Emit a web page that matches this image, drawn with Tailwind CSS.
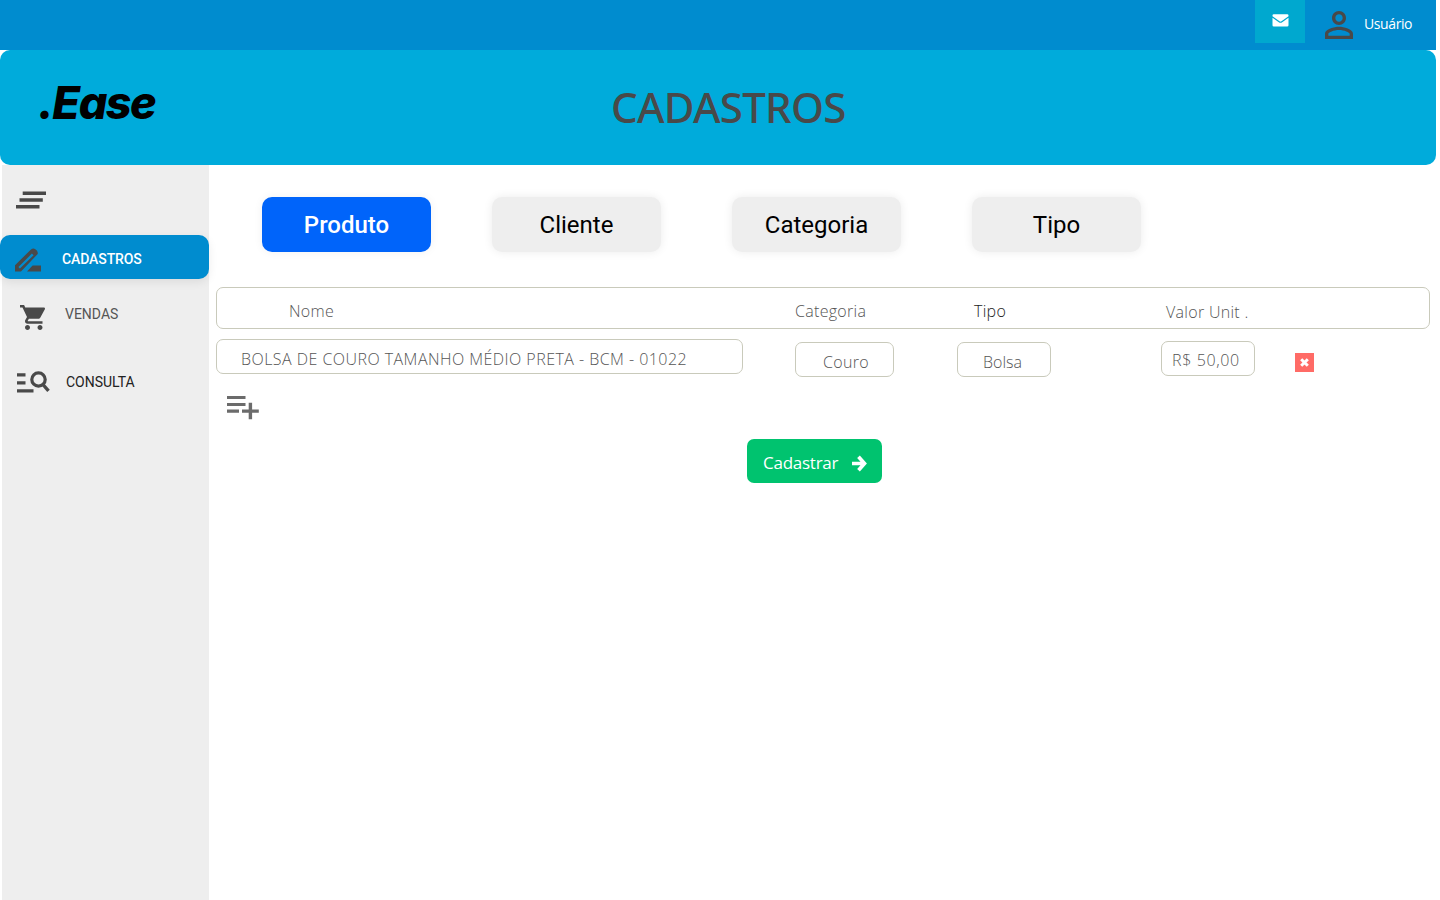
<!DOCTYPE html>
<html lang="pt-BR">
<head>
<meta charset="utf-8">
<title>.Ease - Cadastros</title>
<script src="https://cdn.jsdelivr.net/npm/@tailwindcss/browser@4"></script>
</head>
<body class="h-[900px] w-[1440px] overflow-hidden bg-white font-['Open_Sans','Noto_Sans',sans-serif]">
<div class="flex h-[900px] w-[1436px] flex-col">
  <header class="flex h-[50px] shrink-0 justify-end bg-[#008ccf]">
    <button class="flex h-[43px] w-[50px] items-start justify-center bg-[#00a8cf] pt-[14px]">
      <svg class="h-[13px] w-[17px]" viewBox="0 0 17 13"><path fill="#fff" d="M1.800.3h13.400q1.300 0 1.300 1.300v.7L9.500 7.300q-1 .7-2 0L.5 2.300v-.7Q.5.300 1.800.300zM.5 3.700l6.300 4.500q1.700 1.200 3.400 0l6.300-4.500v7.500q0 1.300-1.300 1.300H1.800Q.5 12.500.5 11.200z"/></svg>
    </button>
    <div class="flex w-[131px] pl-[20px]">
      <svg class="mt-[11px] h-[28px] w-[28px] shrink-0" viewBox="4 4 16 16"><path fill="#494949" d="M12 5.900c1.160 0 2.100.94 2.100 2.100s-.94 2.100-2.100 2.100S9.900 9.160 9.900 8s.94-2.100 2.100-2.100m0 9c2.970 0 6.100 1.460 6.100 2.100v1.100H5.900V17c0-.64 3.130-2.100 6.100-2.100M12 4C9.790 4 8 5.790 8 8s1.790 4 4 4 4-1.790 4-4-1.790-4-4-4zm0 9c-2.670 0-8 1.340-8 4v3h16v-3c0-2.660-5.330-4-8-4z"/></svg>
      <span class="ml-[11px] mt-[14px] text-[14px] leading-[20px] tracking-[-0.4px] text-white">Usuário</span>
    </div>
  </header>
  <div class="flex h-[115px] shrink-0 rounded-[10px] bg-[#00abdb]">
    <div class="w-[611px] shrink-0 pl-[38px] pt-[25px] font-['Inter'] text-[45px] font-extrabold italic leading-[55px] tracking-[-1.500px] text-black">.Ease</div>
    <h1 class="pt-[29px] font-['Noto_Sans'] text-[42px] font-medium leading-[56px] tracking-[-0.7px] text-[#494949]">CADASTROS</h1>
  </div>
  <div class="flex min-h-0 flex-1">
    <nav class="relative ml-[2px] w-[207px] shrink-0 bg-[#eee] font-['Roboto'] text-[14px]">
      <div class="h-[70px] pl-[14px] pt-[26px]">
        <svg class="h-[18px] w-[30px]" viewBox="0 0 30 18" fill="#494949"><path d="M6.700.6H30V4H6.700zM3.500 7.300h23.300v3.400H3.500zM0 14h23.500v3.400H0z"/></svg>
      </div>
      <a class="-ml-[2px] flex h-[44px] w-[209px] rounded-[10px] bg-[#008ccf] pl-[15px] shadow-[0_3px_10px_rgba(0,0,0,0.08)]">
        <svg class="mt-[13px] h-[24px] w-[27px]" viewBox="0 0 27 24" fill="#494949"><path fill-rule="evenodd" d="M0 17.200 15.700 1.700q2.200-1.800 4.300-.8 3.400 2 2.700 5.100L6 23.500H0zM3.400 18.900 4.900 20.400 18.600 7.200 16.900 5.600z"/><path d="M17.600 17.500H26v6H12z"/></svg>
        <span class="pl-[20px] pt-[14px] font-medium leading-[20px] tracking-[-0.1px] text-white">CADASTROS</span>
      </a>
      <a class="flex h-[66px] pl-[18px]">
        <svg class="mt-[26px] h-[25px] w-[25px]" viewBox="1 2 20 20" fill="#494949"><path d="M7 18c-1.100 0-1.990.9-1.990 2S5.900 22 7 22s2-.9 2-2-.9-2-2-2zM1 2v2h2l3.600 7.590-1.350 2.450C4.520 15.370 5.480 17 7 17h12v-2H7.420c-.14 0-.25-.11-.25-.25l.03-.12.9-1.630h7.450c.75 0 1.410-.41 1.750-1.030l3.580-6.490c.37-.66-.11-1.480-.87-1.480H5.210l-.94-2H1zm16 16c-1.100 0-1.990.9-1.990 2s.89 2 1.990 2 2-.9 2-2-.9-2-2-2z"/></svg>
        <span class="pl-[20px] pt-[25px] leading-[20px] text-[#555]">VENDAS</span>
      </a>
      <a class="flex h-[60px] pl-[15px]">
        <svg class="mt-[26px] h-[22px] w-[33px]" viewBox="0 0 33 22" fill="#494949"><path d="M0 2.200h8.500v3.300H0zM0 10.200h8.500v3.300H0zM0 18.200h16.500v3.300H0z"/><circle cx="21.500" cy="8.500" r="6.700" fill="none" stroke="#494949" stroke-width="3.200"/><path d="m25.500 13 6 6.800" stroke="#494949" stroke-width="3.400"/></svg>
        <span class="pl-[16px] pt-[27px] leading-[20px] text-[#222]">CONSULTA</span>
      </a>
    </nav>
    <main class="min-w-0 flex-1 pl-[7px] font-light text-[#555]">
      <div class="flex pl-[46px] pt-[32px] font-['Roboto'] text-[24px] font-normal text-black">
        <button class="h-[55px] w-[169px] rounded-[10px] bg-[#0064fa] font-medium text-white shadow-[0_0_10px_rgba(0,0,0,0.06)]">Produto</button>
        <button class="ml-[61px] h-[55px] w-[169px] rounded-[10px] bg-[#eee] shadow-[0_0_10px_rgba(0,0,0,0.08)]">Cliente</button>
        <button class="ml-[71px] h-[55px] w-[169px] rounded-[10px] bg-[#eee] shadow-[0_0_10px_rgba(0,0,0,0.08)]">Categoria</button>
        <button class="ml-[71px] h-[55px] w-[169px] rounded-[10px] bg-[#eee] shadow-[0_0_10px_rgba(0,0,0,0.08)]">Tipo</button>
      </div>
      <div class="mt-[35px] flex h-[42px] w-[1214px] rounded-[7px] border border-[#c9cabb] pl-[72px] pt-[12px] text-[16px] leading-[22px] tracking-[0.3px]">
        <span class="w-[506px]">Nome</span>
        <span class="w-[179px]">Categoria</span>
        <span class="w-[192px] text-[#222]">Tipo</span>
        <span class="pt-px">Valor Unit .</span>
      </div>
      <div class="flex items-start pt-[10px] text-[16px] leading-[22px]">
        <div class="h-[35px] w-[527px] rounded-[7px] border border-[#c9cabb] pl-[24px] pt-[8px] tracking-[0.46px]">BOLSA DE COURO TAMANHO MÉDIO PRETA - BCM - 01022</div>
        <div class="ml-[52px] mt-[3px] h-[35px] w-[99px] rounded-[7px] border border-[#c9cabb] pl-[27px] pt-[8px] tracking-[0.3px]">Couro</div>
        <div class="ml-[63px] mt-[3px] h-[35px] w-[94px] rounded-[7px] border border-[#c9cabb] pl-[25px] pt-[8px]">Bolsa</div>
        <div class="ml-[110px] mt-[2px] h-[35px] w-[94px] rounded-[7px] border border-[#c9cabb] pl-[10px] pt-[7px] tracking-[0.62px]">R$ 50,00</div>
        <button class="ml-[40px] mt-[14px] flex h-[19px] w-[19px] items-center justify-center bg-[#ff6b66]">
          <svg class="h-[9px] w-[9px]" viewBox="0 0 9 9"><path stroke="#fff" stroke-width="3" d="m1.200 1.200 6.600 6.600m0-6.600L1.200 7.800"/></svg>
        </button>
      </div>
      <svg class="ml-[11px] mt-[18px] h-[25px] w-[32px]" viewBox="0 0 32 25" fill="#6b6b6b"><path d="M0 1h18.500v3H0zM0 8h18.500v3H0zM0 14.500h12v3.300H0zM21.700 7.700h3.400v6.800h6.700v3.300h-6.700v6.500h-3.400v-6.500H15v-3.300h6.700z"/></svg>
      <button class="ml-[531px] mt-[19px] flex h-[44px] w-[135px] rounded-[7px] bg-[#00c36f] pl-[16px] pt-[12px] text-[17px] font-normal leading-[24px] tracking-[-0.25px] text-white">
        <span class="w-[89px] text-left">Cadastrar</span>
        <svg class="mt-[4px] h-[17px] w-[15px]" viewBox="0 0 15 17"><path fill="none" stroke="#fff" stroke-width="3.600" d="M0 8.500h12M6.500 1.800l6 6.700-6 6.700"/></svg>
      </button>
    </main>
  </div>
</div>
</body>
</html>
